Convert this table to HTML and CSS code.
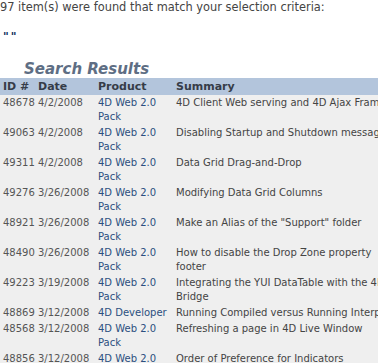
FILE: index.html
```html
<!DOCTYPE html>
<html>
<head>
<meta charset="utf-8">
<link rel="stylesheet" href="styles.css">
</head>
<body>
<div class="page">
  <p class="found">97 item(s) were found that match your selection criteria:</p>
  <p class="query">""</p>
  <h2 class="title">Search Results</h2>
  <table class="results">
    <colgroup>
      <col class="c-id"><col class="c-date"><col class="c-prod"><col class="c-sum">
    </colgroup>
    <thead>
      <tr><th>ID #</th><th>Date</th><th>Product</th><th>Summary</th></tr>
    </thead>
    <tbody>
      <tr><td>48678</td><td>4/2/2008</td><td class="prod">4D Web 2.0 Pack</td><td>4D Client Web serving and 4D Ajax Framework</td></tr>
      <tr><td>49063</td><td>4/2/2008</td><td class="prod">4D Web 2.0 Pack</td><td>Disabling Startup and Shutdown messages</td></tr>
      <tr><td>49311</td><td>4/2/2008</td><td class="prod">4D Web 2.0 Pack</td><td>Data Grid Drag-and-Drop</td></tr>
      <tr><td>49276</td><td>3/26/2008</td><td class="prod">4D Web 2.0 Pack</td><td>Modifying Data Grid Columns</td></tr>
      <tr><td>48921</td><td>3/26/2008</td><td class="prod">4D Web 2.0 Pack</td><td>Make an Alias of the "Support" folder</td></tr>
      <tr><td>48490</td><td>3/26/2008</td><td class="prod">4D Web 2.0 Pack</td><td>How to disable the Drop Zone property<br>footer</td></tr>
      <tr><td>49223</td><td>3/19/2008</td><td class="prod">4D Web 2.0 Pack</td><td>Integrating the YUI DataTable with the 4D Ajax<br>Bridge</td></tr>
      <tr><td>48869</td><td>3/12/2008</td><td class="prod">4D Developer</td><td>Running Compiled versus Running Interpreted</td></tr>
      <tr><td>48568</td><td>3/12/2008</td><td class="prod">4D Web 2.0 Pack</td><td>Refreshing a page in 4D Live Window</td></tr>
      <tr><td>48856</td><td>3/12/2008</td><td class="prod">4D Web 2.0 Pack</td><td>Order of Preference for Indicators</td></tr>
    </tbody>
  </table>
</div>
</body>
</html>
```
FILE: styles.css
```css
html, body {
  margin: 0;
  padding: 0;
  background: #ffffff;
  overflow: hidden;
}
.page {
  font-family: "DejaVu Sans", Verdana, sans-serif;
  color: #444444;
  width: 520px;
}
.found {
  margin: 0;
  font-size: 11.4px;
  line-height: 14px;
  color: #444444;
}
.query {
  margin: 16px 0 0 3px;
  font-size: 11px;
  font-weight: bold;
  line-height: 14px;
  letter-spacing: 2px;
  color: #0d2b5a;
}
.title {
  margin: 16px 0 0 24px;
  font-size: 15px;
  line-height: 18px;
  font-style: italic;
  font-weight: bold;
  color: #5e6e84;
}
.results {
  border-collapse: collapse;
  table-layout: fixed;
  width: 520px;
  font-size: 10px;
  line-height: 14px;
  background: #efefef;
}
.c-id { width: 35px; }
.c-date { width: 60px; }
.c-prod { width: 78px; }
.c-sum { width: 347px; }
.results th {
  background: #b3c5dc;
  color: #363c48;
  text-align: left;
  font-size: 11px;
  font-weight: bold;
  padding: 2px 0 1px 3px;
  line-height: 14px;
}
.results td {
  padding: 1px 0 1px 3px;
  vertical-align: top;
  color: #555555;
}
.results td.prod {
  color: #2c4f80;
}
.results td:last-child {
  color: #444444;
}
```
